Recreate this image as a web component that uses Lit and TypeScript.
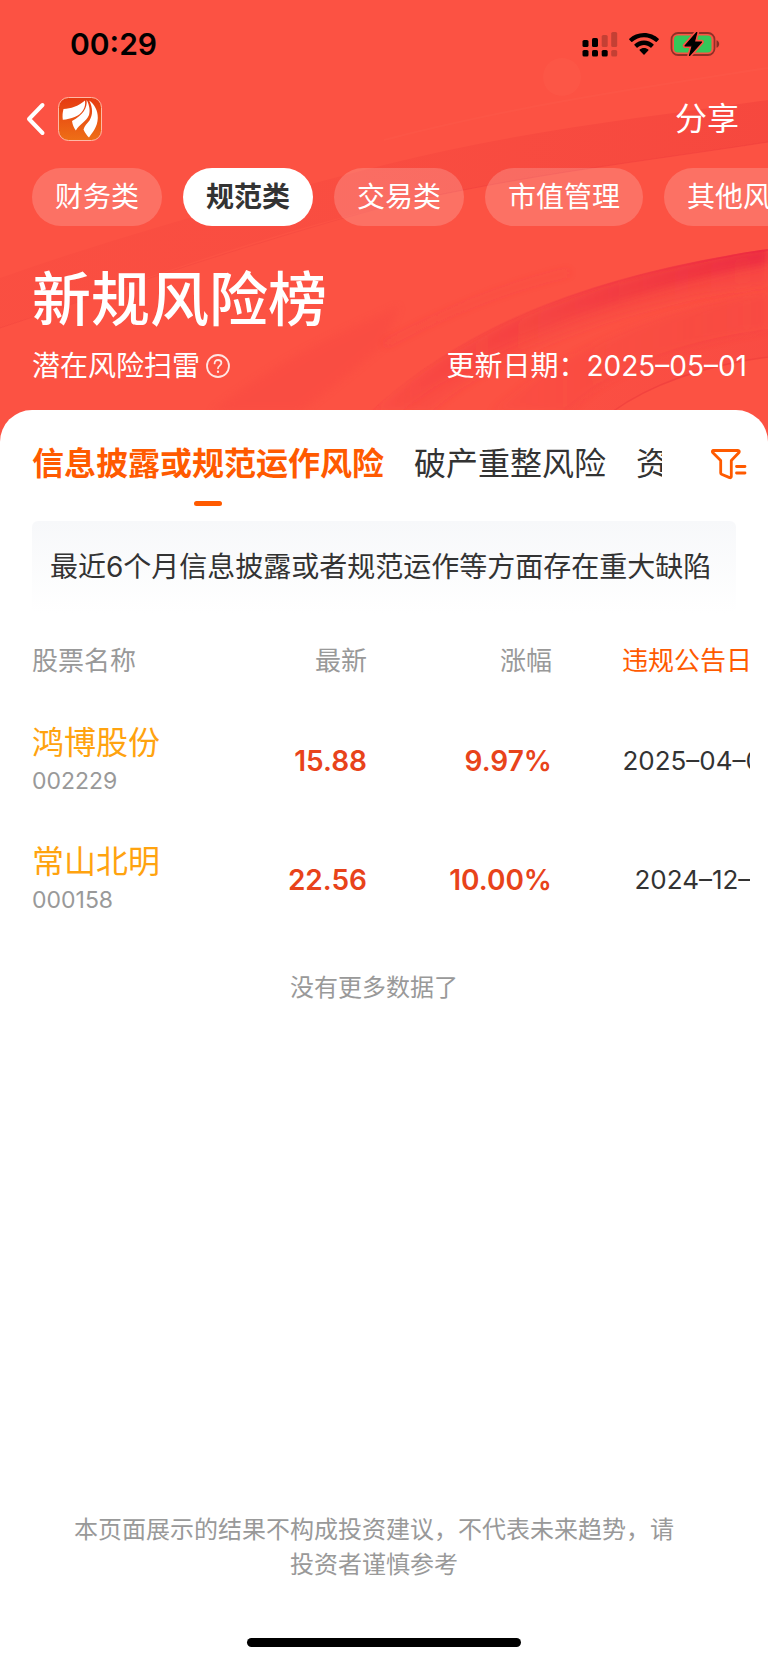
import { LitElement, html, css } from "lit";
import { customElement, property, state } from "lit/decorators.js";
import { classMap } from "lit/directives/class-map.js";

interface Stock {
  name: string;
  code: string;
  price: string;
  change: string;
  date: string;
}

const CATEGORIES = ["财务类", "规范类", "交易类", "市值管理", "其他风险"];
const RISKS = ["信息披露或规范运作风险", "破产重整风险", "资金占用风险"];
const STOCKS: Stock[] = [
  { name: "鸿博股份", code: "002229", price: "15.88", change: "9.97%", date: "2025–04–08" },
  { name: "常山北明", code: "000158", price: "22.56", change: "10.00%", date: "2024–12–31" },
];

@customElement("status-bar")
export class StatusBar extends LitElement {
  static styles = css`
    :host {
      display: flex;
      align-items: center;
      justify-content: space-between;
      height: 88px;
      padding: 0 48px 0 70px;
      color: #000;
    }
    .time {
      font-size: 30px;
      line-height: 36px;
      font-weight: 600;
    }
    .icons {
      display: flex;
      align-items: center;
      gap: 11px;
    }
    svg {
      display: block;
    }
  `;

  render() {
    return html`
      <span class="time">00:29</span>
      <span class="icons">
        <svg width="36" height="26" viewBox="0 0 36 26" aria-label="信号">
          <rect x="0.5" y="9" width="6" height="7" rx="1.6" />
          <rect x="10" y="7" width="6" height="9" rx="1.6" />
          <rect x="19.7" y="4" width="6" height="12" rx="1.6" opacity=".22" />
          <rect x="29.2" y="1" width="6" height="15" rx="1.6" opacity=".22" />
          <rect x="0.5" y="19" width="6" height="6.5" rx="1.6" />
          <rect x="10" y="19" width="6" height="6.5" rx="1.6" />
          <rect x="19.7" y="19" width="6" height="6.5" rx="1.6" />
          <rect x="29.2" y="19" width="6" height="6.5" rx="1.6" opacity=".22" />
        </svg>
        <svg width="30" height="24" viewBox="0 0 30 24" aria-label="无线网络">
          <path
            d="M15 1C9.200 1 4 3.200.3 6.800c-.3.300-.3.700 0 1l2 2c.3.300.7.300 1 0C6.400 6.900 10.500 5.200 15 5.200s8.600 1.700 11.700 4.600c.3.300.7.300 1 0l2-2c.3-.3.3-.7 0-1C26 3.200 20.800 1 15 1z"
          />
          <path
            d="M15 8.600c-3.700 0-7 1.400-9.500 3.700-.3.300-.3.700 0 1l2.100 2.100c.3.300.7.300 1 0 1.700-1.600 4-2.500 6.400-2.500s4.700.9 6.400 2.500c.3.300.7.300 1 0l2.100-2.100c.3-.3.300-.7 0-1C22 10 18.700 8.600 15 8.600z"
          />
          <path
            d="M15 16c-1.700 0-3.200.6-4.300 1.600-.3.300-.3.700 0 1l3.800 3.800c.3.300.7.300 1 0l3.800-3.800c.3-.3.3-.7 0-1C18.200 16.600 16.700 16 15 16z"
          />
        </svg>
        <svg width="50" height="26" viewBox="0 0 50 26" aria-label="充电中">
          <rect x="1.500" y="2" width="43" height="22" rx="6.500" fill="none" stroke="#000" stroke-opacity=".42" stroke-width="1.800" />
          <path d="M46.500 9.200c1.800.6 2.700 2 2.700 3.800s-.9 3.200-2.700 3.800z" opacity=".45" />
          <rect x="4" y="4.500" width="37.500" height="17" rx="4" fill="#34c759" />
          <path d="M26.800 1.500 15 14.800h7.200L19.500 24.500 31.500 11h-7.200z" stroke="#fc5243" stroke-width="4.500" stroke-linejoin="round" />
          <path d="M26.800 1.500 15 14.800h7.200L19.500 24.500 31.500 11h-7.200z" stroke="#000" stroke-width="1.200" stroke-linejoin="round" />
        </svg>
      </span>
    `;
  }
}

@customElement("hero-waves")
export class HeroWaves extends LitElement {
  static styles = css`
    :host {
      position: absolute;
      inset: 0;
      overflow: hidden;
    }
    svg {
      display: block;
      width: 100%;
      height: 100%;
    }
  `;

  render() {
    return html`
      <svg viewBox="0 0 768 442" preserveAspectRatio="xMidYMin slice" aria-hidden="true">
        <defs>
          <linearGradient id="band" x1="0" x2="1">
            <stop offset="0" stop-color="#ee3a38" stop-opacity=".14" />
            <stop offset=".45" stop-color="#ee3a38" stop-opacity=".2" />
            <stop offset="1" stop-color="#ee3a38" stop-opacity=".42" />
          </linearGradient>
          <linearGradient id="swoosh" x1="0" x2="1">
            <stop offset="0" stop-color="#ee3340" stop-opacity=".05" />
            <stop offset=".4" stop-color="#ee3340" stop-opacity=".32" />
            <stop offset="1" stop-color="#ea2440" stop-opacity=".85" />
          </linearGradient>
          <linearGradient id="inner" x1="0" x2="1">
            <stop offset="0" stop-color="#ee3340" stop-opacity=".12" />
            <stop offset="1" stop-color="#ee3340" stop-opacity=".3" />
          </linearGradient>
          <filter id="soft" x="-10%" y="-30%" width="120%" height="160%">
            <feGaussianBlur stdDeviation="4" />
          </filter>
          <clipPath id="below">
            <path d="M370 412C450 340 560 280 768 249V442H370z" />
          </clipPath>
        </defs>
        <path d="M0 278C130 232 260 197 384 165S640 118 768 100V142C640 162 520 175 384 207S120 288 0 328z" fill="url(#band)" />
        <path d="M384 207C520 175 640 162 768 142" fill="none" stroke="#e8353a" stroke-opacity=".35" />
        <path d="M0 328C120 288 260 240 384 207" fill="none" stroke="#e8353a" stroke-opacity=".2" />
        <path d="M384 140C520 105 640 88 768 68" fill="none" stroke="#ff6a55" stroke-opacity=".15" stroke-width="2" />
        <circle cx="562" cy="77" r="19" fill="#ff6a55" opacity=".2" />
        <path d="M210 412C300 345 350 330 400 305L384 345C360 365 330 390 300 412z" fill="#ee3340" opacity=".14" filter="url(#soft)" />
        <path d="M384 345C440 315 500 288 570 272" fill="none" stroke="#ee3340" stroke-opacity=".2" stroke-width="5" filter="url(#soft)" />
        <g clip-path="url(#below)">
          <path d="M370 412C450 340 560 280 768 245V264C620 292 480 345 400 412z" fill="url(#swoosh)" filter="url(#soft)" />
          <path d="M370 412C450 340 560 280 768 249V285C640 300 500 350 430 412z" fill="url(#inner)" filter="url(#soft)" />
          <path d="M490 412C560 350 660 308 768 292V330C680 345 610 370 570 412z" fill="url(#inner)" opacity=".7" filter="url(#soft)" />
          <path d="M560 412C610 366 680 340 768 329V356C700 370 650 385 612 412z" fill="url(#inner)" opacity=".7" />
          <path d="M612 412C650 385 700 366 768 357" fill="none" stroke="#e8353a" stroke-opacity=".45" stroke-width="1.500" />
        </g>
        <path d="M370 412C450 340 560 280 768 250" fill="none" stroke="url(#swoosh)" stroke-opacity=".6" stroke-width="2" />
      </svg>
    `;
  }
}

@customElement("stock-table")
export class StockTable extends LitElement {
  @property({ attribute: false }) rows: Stock[] = [];

  static styles = css`
    :host {
      display: block;
      overflow: hidden;
      margin: 8px 18px 0 32px;
    }
    table {
      width: calc(100% + 28px);
      table-layout: fixed;
      border-collapse: collapse;
    }
    th,
    td {
      padding: 0;
      text-align: right;
      vertical-align: middle;
      font-weight: 400;
      white-space: nowrap;
    }
    th {
      height: 80px;
      font-size: 26px;
      line-height: 36px;
      color: #999;
    }
    td,
    .stock {
      height: 119px;
    }
    .col-price {
      width: 173px;
    }
    .col-change {
      width: 185px;
    }
    .col-date {
      width: 226px;
    }
    .left,
    .stock {
      text-align: left;
    }
    .sort {
      border: 0;
      padding: 0;
      background: none;
      font: inherit;
      color: #ff5a00;
    }
    .name {
      display: block;
      font-size: 32px;
      line-height: 40px;
      color: #ffa30f;
    }
    .code {
      display: block;
      font-size: 23px;
      line-height: 36px;
      color: #999;
    }
    .num {
      font-size: 28px;
      font-weight: 600;
      color: #e8431a;
    }
    .date {
      font-size: 26px;
      color: #333;
    }
  `;

  render() {
    return html`
      <table>
        <colgroup>
          <col />
          <col class="col-price" />
          <col class="col-change" />
          <col class="col-date" />
        </colgroup>
        <thead>
          <tr>
            <th class="left" scope="col">股票名称</th>
            <th scope="col">最新</th>
            <th scope="col">涨幅</th>
            <th scope="col"><button class="sort">违规公告日期</button></th>
          </tr>
        </thead>
        <tbody>
          ${this.rows.map(
            (row) => html`
              <tr>
                <th class="stock" scope="row">
                  <span class="name">${row.name}</span>
                  <span class="code">${row.code}</span>
                </th>
                <td class="num">${row.price}</td>
                <td class="num">${row.change}</td>
                <td class="date">${row.date}</td>
              </tr>
            `
          )}
        </tbody>
      </table>
    `;
  }
}

@customElement("app-root")
export class AppRoot extends LitElement {
  @state() private category = 1;
  @state() private risk = 0;

  static styles = css`
    :host {
      display: flex;
      flex-direction: column;
      min-height: 100vh;
      overflow: hidden;
      background: #fff;
      color: #333;
      font-family: Inter, "Noto Sans CJK SC", sans-serif;
    }
    button {
      border: 0;
      padding: 0;
      background: none;
      font: inherit;
      color: inherit;
      white-space: nowrap;
      flex: none;
    }
    svg {
      display: block;
    }
    .hero {
      position: relative;
      padding-bottom: 58px;
      background: #fc5243;
      color: #fff;
    }
    .content {
      position: relative;
    }
    .nav {
      display: flex;
      align-items: center;
      height: 62px;
      padding: 0 29px 0 26px;
    }
    .logo {
      margin-left: 12px;
    }
    .share {
      margin-left: auto;
      font-size: 32px;
      line-height: 40px;
    }
    .pills {
      display: flex;
      gap: 21px;
      margin-top: 18px;
      padding-left: 32px;
      overflow: hidden;
    }
    .pill {
      height: 58px;
      padding: 0 23px;
      border-radius: 29px;
      background: rgba(255, 255, 255, 0.18);
      font-size: 28px;
      line-height: 36px;
    }
    .pill.active {
      background: #fff;
      color: #333;
      font-weight: 700;
    }
    h1 {
      margin: 38px 0 0;
      padding-left: 32px;
      font-size: 59px;
      line-height: 72px;
      font-weight: 500;
    }
    .sub {
      display: flex;
      align-items: center;
      justify-content: space-between;
      margin-top: 12px;
      padding: 0 21px 0 32px;
      font-size: 28px;
      line-height: 36px;
    }
    .hint {
      display: flex;
      align-items: center;
      gap: 6px;
    }
    .sheet {
      position: relative;
      display: flex;
      flex-direction: column;
      flex: 1;
      margin-top: -32px;
      border-radius: 32px 32px 0 0;
      background: #fff;
    }
    .tabs {
      display: flex;
      justify-content: space-between;
      padding: 36px 21px 0 32px;
    }
    .tablist {
      display: flex;
      gap: 30px;
      flex: 1;
      min-width: 0;
      margin-right: 48px;
      overflow: hidden;
    }
    .tab {
      display: flex;
      flex-direction: column;
      align-items: center;
      gap: 19px;
      font-size: 32px;
      line-height: 36px;
    }
    .tab::after {
      content: "";
      width: 28px;
      height: 5px;
      border-radius: 3px;
    }
    .tab.active {
      color: #ff5a00;
      font-weight: 700;
    }
    .tab.active::after {
      background: #ff5a00;
    }
    .filter {
      height: 36px;
    }
    .note {
      margin: 15px 32px 0;
      padding: 28px 18px;
      border-radius: 6px;
      background: linear-gradient(#f7f8fa, #fff);
      font-size: 28px;
      line-height: 36px;
      white-space: nowrap;
    }
    .more {
      margin: 31px 20px 0 0;
      text-align: center;
      font-size: 24px;
      line-height: 35px;
      color: #999;
    }
    footer {
      margin-top: auto;
      padding: 0 84px 0 64px;
      text-align: center;
      font-size: 24px;
      line-height: 35px;
      color: #999;
    }
    footer p {
      margin: 0;
    }
    .home {
      align-self: center;
      width: 274px;
      height: 9px;
      margin: 56px 0 15px;
      border-radius: 5px;
      background: #000;
    }
  `;

  render() {
    return html`
      <header class="hero">
        <hero-waves></hero-waves>
        <div class="content">
          <status-bar></status-bar>
          <nav class="nav">
            <button aria-label="返回">
              <svg width="20" height="34" viewBox="0 0 20 34" fill="none" stroke="#fff" stroke-width="4" stroke-linecap="round" stroke-linejoin="round">
                <path d="M16.500 3 3 17l13.500 14" />
              </svg>
            </button>
            <button class="logo" aria-label="首页">
              <svg width="44" height="44" viewBox="0 0 44 44">
                <defs>
                  <linearGradient id="tile" x2="0" y2="1">
                    <stop stop-color="#e63a12" />
                    <stop offset="1" stop-color="#ee6f16" />
                  </linearGradient>
                </defs>
                <rect x=".5" y=".5" width="43" height="43" rx="10" fill="url(#tile)" stroke="#ffb9a6" />
                <g fill="#fff">
                  <path d="M27 3.500C20 9.500 13 11.500 5.500 12 4.500 15.500 4.300 19 4.800 22.800 13 22 21.500 19.500 25.200 13 27 10 27.500 7 27 3.500z" />
                  <path d="M28.600 3C29.500 11 25 18 14 24 14.500 28 16 31 17.800 33.500 21.500 27 28.500 24.500 31 18 32.500 13 31 7 28.600 3z" />
                  <path d="M31.200 3.500C35 11 35 18 31.500 23.500 29 27 26.500 28.500 25.500 32.500 27 36 29 38.500 31 40.500 34.500 35.500 39.500 30 39.800 21 40 13.500 36.500 7.500 31.200 3.500z" />
                </g>
              </svg>
            </button>
            <button class="share">分享</button>
          </nav>
          <div class="pills">
            ${CATEGORIES.map(
              (label, i) => html`
                <button class=${classMap({ pill: true, active: i === this.category })} @click=${() => (this.category = i)}>${label}</button>
              `
            )}
          </div>
          <h1>新规风险榜</h1>
          <div class="sub">
            <span class="hint">
              潜在风险扫雷
              <button aria-label="说明">
                <svg width="24" height="24" viewBox="0 0 24 24" fill="none" stroke="#fff" stroke-opacity=".85" stroke-width="1.800" stroke-linecap="round">
                  <circle cx="12" cy="12" r="11" />
                  <path d="M8.600 9.400c0-2 1.500-3.400 3.400-3.400s3.400 1.300 3.400 3.100c0 2.400-3.400 2.600-3.400 5.200" />
                  <path d="M12 17.600v.3" stroke-width="2.200" />
                </svg>
              </button>
            </span>
            <span>更新日期：2025–05–01</span>
          </div>
        </div>
      </header>
      <main class="sheet">
        <div class="tabs">
          <div class="tablist" role="tablist">
            ${RISKS.map(
              (label, i) => html`
                <button
                  role="tab"
                  aria-selected=${i === this.risk ? "true" : "false"}
                  class=${classMap({ tab: true, active: i === this.risk })}
                  @click=${() => (this.risk = i)}
                >${label}</button>
              `
            )}
          </div>
          <button class="filter" aria-label="筛选">
            <svg width="37" height="32" viewBox="0 0 37 32" fill="none" stroke="#ff5a00" stroke-width="2.800" stroke-linecap="round" stroke-linejoin="round">
              <path d="M3.500 2.500h24.500c1.200 0 1.700 1.200 1 2L21.300 12.500V28.500c0 1-.9 1.500-1.700 1.100L11.500 26.300c-.5-.2-.8-.6-.8-1.200V12.500L2.700 4.500c-.8-.9-.2-2 .8-2z" />
              <path d="M26.500 18.500h8.500M26.500 25h8.500" />
            </svg>
          </button>
        </div>
        <div class="note">最近6个月信息披露或者规范运作等方面存在重大缺陷</div>
        <stock-table .rows=${STOCKS}></stock-table>
        <div class="more">没有更多数据了</div>
        <footer><p>本页面展示的结果不构成投资建议，不代表未来趋势，请投资者谨慎参考</p></footer>
        <div class="home"></div>
      </main>
    `;
  }
}
